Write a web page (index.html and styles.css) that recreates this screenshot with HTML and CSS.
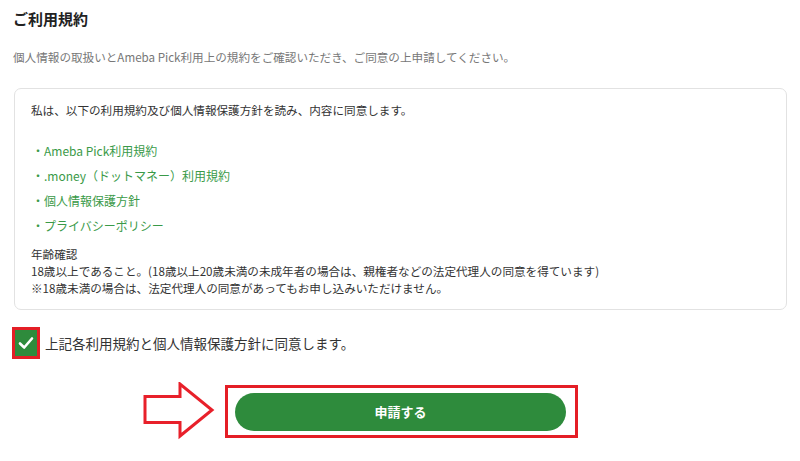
FILE: index.html
```html
<!DOCTYPE html>
<html lang="ja">
<head>
<meta charset="utf-8">
<link rel="stylesheet" href="styles.css">
</head>
<body>
<div class="page">
  <h2 class="title">ご利用規約</h2>
  <p class="lead">個人情報の取扱いとAmeba Pick利用上の規約をご確認いただき、ご同意の上申請してください。</p>
  <div class="card">
    <p class="intro">私は、以下の利用規約及び個人情報保護方針を読み、内容に同意します。</p>
    <ul class="links">
      <li>・Ameba Pick利用規約</li>
      <li>・.money（ドットマネー）利用規約</li>
      <li>・個人情報保護方針</li>
      <li>・プライバシーポリシー</li>
    </ul>
    <div class="age">
      <div>年齢確認</div>
      <div>18歳以上であること。(18歳以上20歳未満の未成年者の場合は、親権者などの法定代理人の同意を得ています)</div>
      <div>※18歳未満の場合は、法定代理人の同意があってもお申し込みいただけません。</div>
    </div>
  </div>
  <label class="agree">
    <span class="mark"><span class="box"><svg width="16" height="14" viewBox="0 0 16 14"><path d="M2 7.5 L6.2 11.5 L14 2.5" fill="none" stroke="#fff" stroke-width="2.6" stroke-linecap="round" stroke-linejoin="round"/></svg></span></span>
    <span class="agree-text">上記各利用規約と個人情報保護方針に同意します。</span>
  </label>
  <div class="submit-row">
    <svg class="arrow" width="72" height="58" viewBox="0 0 72 58"><polygon points="2,14.5 37,14.5 37,2 69,28 37,54 37,40.5 2,40.5" fill="#fff" stroke="#e8202a" stroke-width="3" stroke-linejoin="miter"/></svg>
    <div class="highlight">
      <button class="btn">申請する</button>
    </div>
  </div>
</div>
</body>
</html>
```
FILE: styles.css
```css
html, body {
  margin: 0;
  padding: 0;
  background: #fff;
}
body {
  font-family: "Noto Sans CJK JP", "Noto Sans", sans-serif;
  color: #333;
}
.page {
  width: 774px;
  padding: 9px 0 0 13px;
}
.title {
  margin: 0;
  font-size: 15px;
  line-height: 20px;
  font-weight: bold;
  color: #222;
}
.lead {
  margin: 19px 0 0;
  font-size: 11.6px;
  line-height: 18px;
  color: #777;
}
.card {
  margin: 22px 0 0 1px;
  border: 1px solid #e2e2e2;
  border-radius: 7px;
  padding: 13px 16px 12px;
  font-size: 11.6px;
  line-height: 17px;
}
.intro {
  margin: 0;
}
.links {
  list-style: none;
  margin: 19px 0 0;
  padding: 0 0 0 1px;
  color: #3a9a48;
  font-size: 12px;
}
.links li {
  line-height: 25px;
  height: 25px;
}
.age {
  margin-top: 8px;
  color: #333;
}
.age div {
  line-height: 17px;
}
.agree {
  display: flex;
  align-items: center;
  margin: 17px 0 0 -1px;
  gap: 5px;
}
.mark {
  display: block;
  border: 3px solid #e41e26;
}
.box {
  display: flex;
  align-items: center;
  justify-content: center;
  width: 22px;
  height: 26px;
  background: #2e8b3c;
}
.agree-text {
  font-size: 13.5px;
  color: #333;
}
.submit-row {
  display: flex;
  align-items: center;
  margin: 23px 0 0 130px;
  gap: 10px;
}
.arrow {
  display: block;
}
.highlight {
  border: 3px solid #e41e26;
  padding: 5px 9px 4px 7px;
}
.btn {
  display: block;
  width: 331px;
  height: 38px;
  border: none;
  border-radius: 19px;
  background: #2e8b3c;
  color: #fff;
  font-family: "Noto Sans CJK JP", sans-serif;
  font-size: 13px;
  font-weight: bold;
}
```
